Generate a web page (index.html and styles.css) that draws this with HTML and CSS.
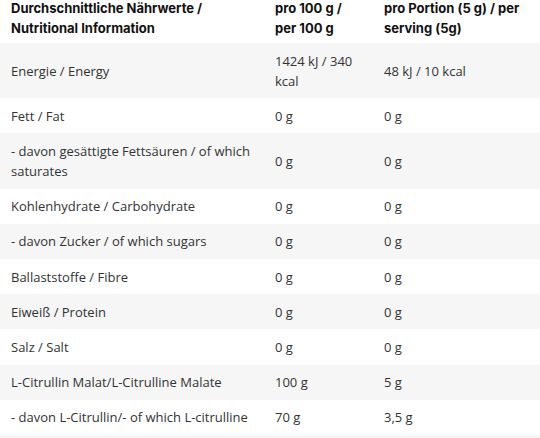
FILE: index.html
```html
<!DOCTYPE html>
<html lang="de">
<head>
    <meta charset="UTF-8">
    <meta name="viewport" content="width=device-width, initial-scale=1.0">
    <title>Nährwerte</title>
    <link rel="stylesheet" href="styles.css">
</head>
<body>
<!-- Nährwerttabelle -->
<table class="nutrition">
    <colgroup>
        <col class="col-name">
        <col class="col-100">
        <col class="col-portion">
    </colgroup>
    <thead>
    <tr>
        <th>Durchschnittliche Nährwerte / Nutritional Information</th>
        <th>pro 100 g / per 100 g</th>
        <th>pro Portion (5 g) / per serving (5g)</th>
    </tr>
    </thead>
    <tbody>
    <tr><td>Energie / Energy</td><td>1424 kJ / 340 kcal</td><td>48 kJ / 10 kcal</td></tr>
    <tr><td>Fett / Fat</td><td>0 g</td><td>0 g</td></tr>
    <tr><td>- davon gesättigte Fettsäuren / of which saturates</td><td>0 g</td><td>0 g</td></tr>
    <tr><td>Kohlenhydrate / Carbohydrate</td><td>0 g</td><td>0 g</td></tr>
    <tr><td>- davon Zucker / of which sugars</td><td>0 g</td><td>0 g</td></tr>
    <tr><td>Ballaststoffe / Fibre</td><td>0 g</td><td>0 g</td></tr>
    <tr><td>Eiweiß / Protein</td><td>0 g</td><td>0 g</td></tr>
    <tr><td>Salz / Salt</td><td>0 g</td><td>0 g</td></tr>
    <tr><td>L-Citrullin Malat/L-Citrulline Malate</td><td>100 g</td><td>5 g</td></tr>
    <tr><td>- davon L-Citrullin/- of which L-citrulline</td><td>70 g</td><td>3,5 g</td></tr>
    </tbody>
</table>
<div class="after"></div>
</body>
</html>
```

FILE: styles.css
```css
body {
    margin: 0;
    padding: 0;
    background-color: #fff;
    font-family: "Open Sans", Arial, sans-serif;
    color: #333;
}

/* Nährwerttabelle */
.nutrition {
    width: 540px;
    margin-top: -2px;
    border-collapse: collapse;
    table-layout: fixed;
}

.col-name {
    width: 264px;
}

.col-100 {
    width: 109px;
}

.col-portion {
    width: 167px;
}

.nutrition th {
    font-family: Inter, "Liberation Sans", sans-serif;
    font-weight: 700;
    font-size: 13px;
    line-height: 20px;
    color: #111;
    text-align: left;
    vertical-align: top;
    padding: 0 11px 5px;
}

.nutrition td {
    font-size: 13px;
    line-height: 20px;
    text-align: left;
    padding: 7.6px 11px;
}

.nutrition tbody tr:nth-child(odd) {
    background-color: #f6f6f6;
}

.after {
    height: 10px;
    background-color: #f6f6f6;
}
```
